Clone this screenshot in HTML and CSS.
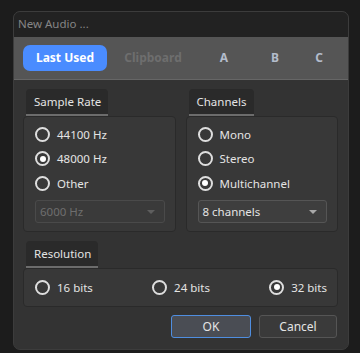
FILE: index.html
```html
<!DOCTYPE html>
<html lang="en">
<head>
  <meta charset="UTF-8">
  <title>New Audio</title>
  <link rel="stylesheet" href="styles.css">
</head>
<body>
<div class="dialog">
  <div class="titlebar">New Audio ...</div>
  <div class="presets">
    <div class="preset active">Last Used</div>
    <div class="preset muted">Clipboard</div>
    <div class="preset letter">A</div>
    <div class="preset letter">B</div>
    <div class="preset letter">C</div>
  </div>
  <div class="content">
    <div class="columns">
      <div class="group">
        <div class="legend">Sample Rate</div>
        <div class="box">
          <div class="radio"><span class="dot"></span>44100 Hz</div>
          <div class="radio"><span class="dot checked"></span>48000 Hz</div>
          <div class="radio"><span class="dot"></span>Other</div>
          <div class="select disabled">6000 Hz<span class="arrow"></span></div>
        </div>
      </div>
      <div class="group">
        <div class="legend">Channels</div>
        <div class="box">
          <div class="radio"><span class="dot"></span>Mono</div>
          <div class="radio"><span class="dot"></span>Stereo</div>
          <div class="radio"><span class="dot checked"></span>Multichannel</div>
          <div class="select">8 channels<span class="arrow"></span></div>
        </div>
      </div>
    </div>
    <div class="group">
      <div class="legend">Resolution</div>
      <div class="box row">
        <div class="radio"><span class="dot"></span>16 bits</div>
        <div class="radio"><span class="dot"></span>24 bits</div>
        <div class="radio"><span class="dot checked"></span>32 bits</div>
      </div>
    </div>
    <div class="buttons">
      <div class="btn default">OK</div>
      <div class="btn">Cancel</div>
    </div>
  </div>
</div>
</body>
</html>
```

FILE: styles.css
```css
*{margin: 0;padding: 0;box-sizing: border-box;}
body{
  background: #1c1c1c;
  font-family: "Noto Sans", "Open Sans", sans-serif;
  font-size: 11.5px;
  color: #e4e4e4;
  width: 360px;
  height: 353px;
  overflow: hidden;
}

/* dialog frame */
.dialog{
  margin: 11px 0 0 13px;
  width: 336px;
  height: 339px;
  border: 1px solid #3c3c3c;
  border-radius: 7px;
  background: #333;
  overflow: hidden;
  display: flex;
  flex-direction: column;
}
.titlebar{
  height: 25px;
  background: #222;
  color: #858585;
  padding: 4px 0 0 4px;
  font-size: 11.5px;
}

/* preset tabs */
.presets{
  height: 43px;
  background: #555;
  border-bottom: 1px solid #666;
  display: flex;
  align-items: center;
  padding: 0 0 0 9px;
  font-weight: bold;
  font-size: 12px;
}
.preset{
  height: 26px;
  line-height: 26px;
  text-align: center;
}
.active{
  width: 84px;
  background: #4a8cff;
  color: #fff;
  border-radius: 7px;
}
.muted{
  width: 60px;
  margin-left: 16px;
  color: #6e6e6e;
}
.letter{
  color: #b3bccb;
  width: 12px;
}
.letter:nth-child(3){margin-left: 35px;}
.letter:nth-child(4){margin-left: 39px;}
.letter:nth-child(5){margin-left: 32px;}

/* body */
.content{
  flex: 1;
  padding: 9px 10px 0 9px;
  display: flex;
  flex-direction: column;
}
.columns{
  display: flex;
  gap: 10px;
  margin-bottom: 9px;
}
.columns .group{flex: 1;}
.legend{
  display: inline-block;
  margin-left: 3px;
  height: 27px;
  padding: 5px 7px 0 8px;
  background: #2a2a2a;
  border-radius: 4px 4px 0 0;
  border-bottom: 2px solid #6c6c6c;
}
.box{
  background: #383838;
  border: 1px solid #2a2a2a;
  border-radius: 4px;
  padding: 5px 10px 8px 11px;
}
.row{
  display: flex;
  justify-content: space-between;
  padding: 8px 10px 8px 11px;
}

/* radio buttons */
.radio{
  height: 24.5px;
  display: flex;
  align-items: center;
  gap: 7px;
}
.row .radio{height: 21px;}
.dot{
  width: 15px;
  height: 15px;
  border: 2px solid #dedede;
  border-radius: 50%;
  position: relative;
}
.checked::before{
  content: '';
  position: absolute;
  left: 2.5px;
  top: 2.5px;
  width: 6px;
  height: 6px;
  border-radius: 50%;
  background: #fff;
}

/* dropdown */
.select{
  margin-top: 4px;
  height: 23px;
  border: 1px solid #555;
  background: #3e3e3e;
  border-radius: 3px;
  padding: 3px 0 0 4px;
  position: relative;
}
.disabled{
  color: #6e6e6e;
  background: #3a3a3a;
  border-color: #4a4a4a;
}
.arrow{
  position: absolute;
  right: 9px;
  top: 9px;
  border: 4px solid transparent;
  border-top: 4px solid #a8a8a8;
  border-bottom: 0;
}
.disabled .arrow{border-top-color: #5e5e5e;}

/* buttons */
.buttons{
  display: flex;
  justify-content: flex-end;
  gap: 8px;
  margin-top: 8px;
  padding-right: 1px;
}
.btn{
  width: 78px;
  height: 23px;
  line-height: 21px;
  text-align: center;
  border: 1px solid #555;
  border-radius: 3px;
  background: #3a3a3a;
  font-size: 12px;
}
.default{
  width: 80px;
  border-color: #4f8ee0;
  background: #4a4d54;
}
```
